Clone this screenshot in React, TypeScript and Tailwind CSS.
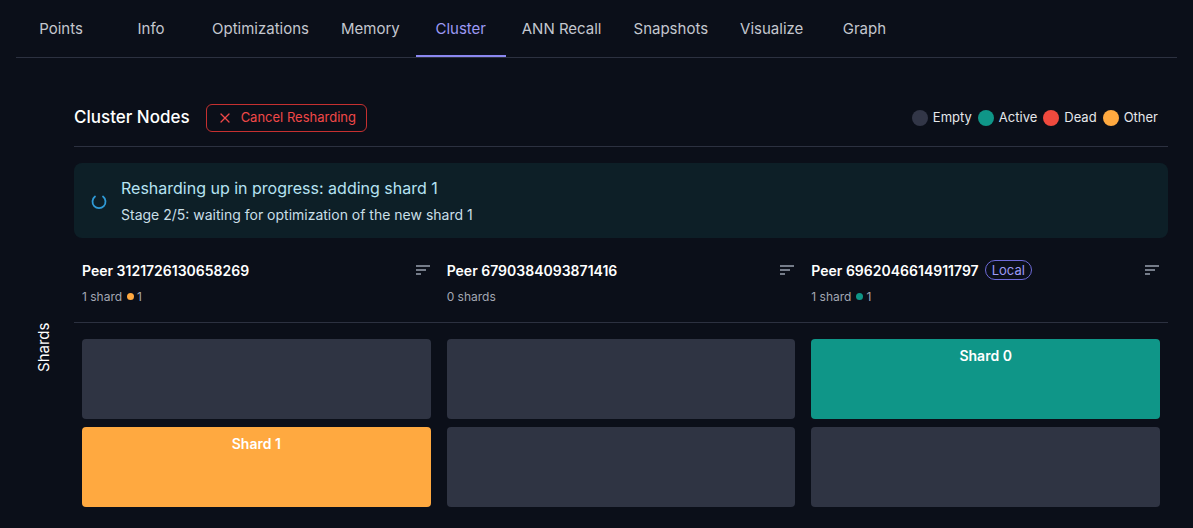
import { X } from 'lucide-react';

const tabs = ['Points', 'Info', 'Optimizations', 'Memory', 'Cluster', 'ANN Recall', 'Snapshots', 'Visualize', 'Graph'];

type Peer = { id: string; local?: boolean; count: string; dot?: string; shards: (null | { label?: string; color: string })[] };

const peers: Peer[] = [
  { id: '3121726130658269', count: '1 shard', dot: 'bg-[#ffa940]', shards: [null, { label: 'Shard 1', color: 'bg-[#ffa940]' }] },
  { id: '6790384093871416', count: '0 shards', shards: [null, null] },
  { id: '6962046614911797', local: true, count: '1 shard', dot: 'bg-[#0f9688]', shards: [{ label: 'Shard 0', color: 'bg-[#0f9688]' }, null] },
];

function SortIcon() {
  return (
    <svg width="16" height="12" viewBox="0 0 16 12" className="text-gray-400">
      <path d="M1 2h14M1 6h10M1 10h5" stroke="currentColor" strokeWidth="1.5" />
    </svg>
  );
}

export default function App() {
  return (
    <div className="min-h-[528px] bg-[#0b0f19] px-4 text-[#e5e7eb]" style={{ fontFamily: 'Inter, "Noto Sans", sans-serif' }}>
      <div className="flex border-b border-[#2c3140] pt-[18px]">
        {tabs.map((t) => (
          <div
            key={t}
            className={`min-w-[90px] px-4 pb-[14px] text-center text-[15px] ${
              t === 'Cluster' ? 'border-b-2 border-[#8b87f0] text-[#9d9af5]' : 'border-b-2 border-transparent text-[#c4c7cf]'
            }`}
          >
            {t}
          </div>
        ))}
      </div>

      <div className="flex">
        <div className="flex w-[58px] items-center justify-center pt-[130px]">
          <span className="-rotate-90 text-[15px] text-white">Shards</span>
        </div>
        <div className="flex-1 pr-[9px]">
          <div className="mt-[46px] flex items-center border-b border-[#2c3140] pb-[14px]">
            <span className="text-[17px] font-medium text-white">Cluster Nodes</span>
            <button className="ml-4 flex h-[28px] items-center gap-2 rounded-md border border-[#c53030] px-[10px] text-[13px] text-[#f04848]">
              <X size={16} strokeWidth={1.8} />
              Cancel Resharding
            </button>
            <div className="ml-auto flex items-center gap-[6px] pr-[10px] text-[13px] text-[#e5e7eb]">
              {[
                ['bg-[#323647]', 'Empty'],
                ['bg-[#0f9688]', 'Active'],
                ['bg-[#f04a3e]', 'Dead'],
                ['bg-[#ffa940]', 'Other'],
              ].map(([c, l]) => (
                <span key={l} className="flex items-center gap-[5px]">
                  <span className={`h-4 w-4 rounded-full ${c}`} />
                  {l}
                </span>
              ))}
            </div>
          </div>

          <div className="mt-4 flex h-[75px] items-center gap-[13px] rounded-lg bg-[#0d1f27] px-4">
            <svg width="18" height="18" viewBox="0 0 18 18" className="mt-1">
              <path d="M5 3.5A6.5 6.5 0 1 0 13 3.5" fill="none" stroke="#2f9ad6" strokeWidth="1.8" strokeLinecap="round" />
            </svg>
            <div>
              <div className="text-[16px] text-[#b6e3f3]">Resharding up in progress: adding shard 1</div>
              <div className="mt-1 text-[14px] text-[#c9dfe7]">Stage 2/5: waiting for optimization of the new shard 1</div>
            </div>
          </div>

          <div className="grid grid-cols-3 gap-4 border-b border-[#2c3140] px-2 pb-4 pt-[22px]">
            {peers.map((p) => (
              <div key={p.id}>
                <div className="flex items-center justify-between">
                  <div className="flex items-center gap-[6px]">
                    <span className="text-[14px] font-semibold text-white">Peer {p.id}</span>
                    {p.local && (
                      <span className="rounded-full border border-[#6e6ad8] px-[6px] text-[13px] leading-[18px] text-[#9d9af5]">Local</span>
                    )}
                  </div>
                  <SortIcon />
                </div>
                <div className="mt-[7px] flex items-center gap-[5px] text-[12px] text-[#a3a7b3]">
                  {p.count}
                  {p.dot && (
                    <span className="flex items-center gap-[3px] text-[#a3a7b3]">
                      <span className={`h-[7px] w-[7px] rounded-full ${p.dot}`} />1
                    </span>
                  )}
                </div>
              </div>
            ))}
          </div>

          <div className="grid grid-cols-3 gap-x-4 gap-y-2 px-2 pt-4">
            {[0, 1].flatMap((row) =>
              peers.map((p) => {
                const s = p.shards[row];
                return (
                  <div
                    key={p.id + row}
                    className={`h-[80px] rounded-sm pt-[6px] text-center text-[14px] font-semibold text-white ${s ? s.color : 'bg-[#2f3443]'}`}
                  >
                    {s?.label}
                  </div>
                );
              })
            )}
          </div>
        </div>
      </div>
    </div>
  );
}
